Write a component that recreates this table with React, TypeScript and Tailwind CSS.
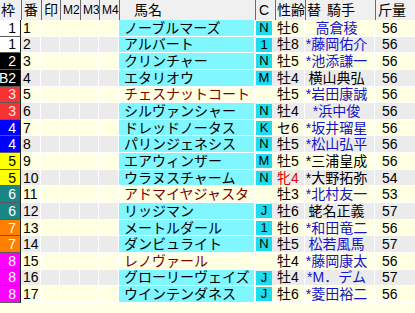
import React from "react";

type Row = {
  waku: string;
  num: number;
  name: string;
  c: string;
  sex: string;
  jockey: string;
  jBlue: boolean;
  kin: number;
};

const rows: Row[] = [
  { waku: "1", num: 1, name: "ノーブルマーズ", c: "N", sex: "牡6", jockey: "高倉稜", jBlue: true, kin: 56 },
  { waku: "1", num: 2, name: "アルバート", c: "1", sex: "牡8", jockey: "*藤岡佑介", jBlue: true, kin: 56 },
  { waku: "2", num: 3, name: "クリンチャー", c: "N", sex: "牡5", jockey: "*池添謙一", jBlue: true, kin: 56 },
  { waku: "B2", num: 4, name: "エタリオウ", c: "M", sex: "牡4", jockey: "横山典弘", jBlue: false, kin: 56 },
  { waku: "3", num: 5, name: "チェスナットコート", c: "", sex: "牡5", jockey: "*岩田康誠", jBlue: true, kin: 56 },
  { waku: "3", num: 6, name: "シルヴァンシャー", c: "N", sex: "牡4", jockey: "*浜中俊", jBlue: true, kin: 56 },
  { waku: "4", num: 7, name: "ドレッドノータス", c: "K", sex: "セ6", jockey: "*坂井瑠星", jBlue: true, kin: 56 },
  { waku: "4", num: 8, name: "パリンジェネシス", c: "N", sex: "牡5", jockey: "*松山弘平", jBlue: true, kin: 56 },
  { waku: "5", num: 9, name: "エアウィンザー", c: "M", sex: "牡5", jockey: "*三浦皇成", jBlue: false, kin: 56 },
  { waku: "5", num: 10, name: "ウラヌスチャーム", c: "N", sex: "牝4", jockey: "*大野拓弥", jBlue: false, kin: 54 },
  { waku: "6", num: 11, name: "アドマイヤジャスタ", c: "", sex: "牡3", jockey: "*北村友一", jBlue: true, kin: 53 },
  { waku: "6", num: 12, name: "リッジマン", c: "J", sex: "牡6", jockey: "蛯名正義", jBlue: false, kin: 57 },
  { waku: "7", num: 13, name: "メートルダール", c: "1", sex: "牡6", jockey: "*和田竜二", jBlue: true, kin: 56 },
  { waku: "7", num: 14, name: "ダンビュライト", c: "N", sex: "牡5", jockey: "松若風馬", jBlue: true, kin: 57 },
  { waku: "8", num: 15, name: "レノヴァール", c: "", sex: "牡4", jockey: "*藤岡康太", jBlue: true, kin: 56 },
  { waku: "8", num: 16, name: "グローリーヴェイズ", c: "J", sex: "牡4", jockey: "*M．デム", jBlue: true, kin: 57 },
  { waku: "8", num: 17, name: "ウインテンダネス", c: "J", sex: "牡6", jockey: "*菱田裕二", jBlue: true, kin: 56 },
];

function wakuClass(w: string): string {
  switch (w) {
    case "1":
      return "bg-white text-black";
    case "2":
    case "B2":
      return "bg-black text-white";
    case "3":
      return "bg-[#f53333] text-[#ffe4e4]";
    case "4":
      return "bg-[#0000ff] text-white";
    case "5":
      return "bg-[#ffff00] text-black";
    case "6":
      return "bg-[#1a8585] text-white";
    case "7":
      return "bg-[#ff8000] text-white";
    default:
      return "bg-[#ff00ff] text-white";
  }
}

export default function App() {
  return (
    <div
      className="w-[415px] h-[313px] overflow-hidden bg-[#ffffe6] text-[14px] leading-[14px] text-black"
      style={{ fontFamily: '"Liberation Sans", "Noto Sans CJK JP", sans-serif' }}
    >
      {/* header */}
      <div className="flex h-[20px] bg-[#f0f0f0] items-center">
        <div className="w-[21px] h-full flex items-center pl-[1px]">枠</div>
        <div className="w-[20px] h-full flex items-center pl-[2px] border-l border-[#6a6a6a]">番</div>
        <div className="w-[19px] h-full flex items-center pl-[2px] border-l border-[#6a6a6a]">印</div>
        <div className="w-[20px] h-full flex items-center pl-[2px] border-l border-[#6a6a6a] text-[12px]">M2</div>
        <div className="w-[19px] h-full flex items-center pl-[2px] border-l border-[#6a6a6a] text-[12px]">M3</div>
        <div className="w-[20px] h-full flex items-center pl-[2px] border-l border-[#6a6a6a] text-[12px]">M4</div>
        <div className="w-[136px] h-full flex items-center pl-[14px] border-l border-[#6a6a6a]">馬名</div>
        <div className="w-[20px] h-full flex items-center pl-[3px] border-l border-[#6a6a6a]">C</div>
        <div className="w-[30px] h-full flex items-center pl-[1px] border-l border-[#6a6a6a]">性齢</div>
        <div className="w-[70px] h-full flex items-center pl-[1px] border-l border-[#6a6a6a]">
          替<span className="ml-[6px]">騎手</span>
        </div>
        <div className="flex-1 h-full flex items-center pl-[2px] border-l border-[#6a6a6a]">斤量</div>
      </div>

      {/* body */}
      <div className="flex flex-col">
        {rows.map((r, i) => {
          const rowBg = i % 2 === 0 ? "bg-[#ffffe1]" : "bg-[#ebebeb]";
          const hasC = r.c !== "";
          return (
            <div key={r.num} className="flex h-[16.65px] leading-[14px]">
              <div
                className={`w-[21px] h-full flex items-center justify-end pr-[4px] border-r border-b border-r-[#202020] border-b-[#5a5a5a] ${wakuClass(
                  r.waku
                )}`}
              >
                {r.waku}
              </div>
              <div className={`w-[20px] h-full flex items-center pl-[2px] border-r border-b border-white ${rowBg}`}>
                {r.num}
              </div>
              <div className={`w-[19px] h-full border-r border-b border-white ${rowBg}`} />
              <div className={`w-[20px] h-full border-r border-b border-white ${rowBg}`} />
              <div className={`w-[19px] h-full border-r border-b border-white ${rowBg}`} />
              <div className={`w-[20px] h-full border-r border-b border-white ${rowBg}`} />
              <div
                className={`w-[136px] h-full flex items-center pl-[5px] border-r border-b border-white whitespace-nowrap ${
                  hasC ? "bg-[#80f6ff] text-black" : `${rowBg} text-[#800000]`
                }`}
              >
                {r.name}
              </div>
              <div className={`w-[20px] h-full flex items-start pt-[1px] pl-[1px] border-b border-white ${rowBg}`}>
                {hasC && (
                  <div className="w-[16px] h-[14px] bg-[#1fdcec] flex items-center justify-center text-[13px] leading-[14px]">
                    {r.c}
                  </div>
                )}
              </div>
              <div
                className={`w-[30px] h-full flex items-center pl-[2px] border-r border-b border-white ${rowBg} ${
                  r.sex === "牝4" ? "text-[#e00000]" : "text-black"
                }`}
              >
                {r.sex}
              </div>
              <div
                className={`w-[70px] h-full flex items-center justify-center pr-[6px] border-r border-b border-white whitespace-nowrap ${rowBg} ${
                  r.jBlue ? "text-[#1414c8]" : "text-black"
                }`}
              >
                {r.jockey}
              </div>
              <div className={`flex-1 h-full flex items-center pl-[7px] border-b border-white ${rowBg}`}>
                {r.kin}
              </div>
            </div>
          );
        })}
      </div>
    </div>
  );
}
